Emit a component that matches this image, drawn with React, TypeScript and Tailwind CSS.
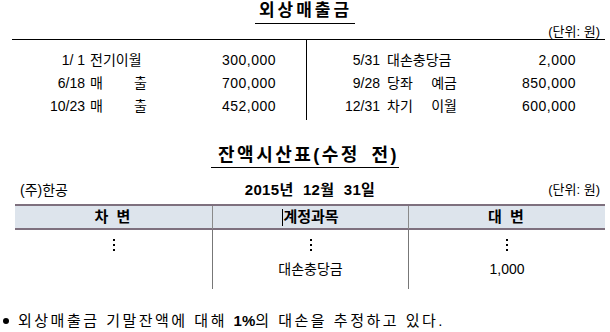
import React from 'react';

const font = { fontFamily: '"Liberation Sans", "Noto Sans CJK KR", sans-serif' };

type Entry = { date: string; label: string[]; amount: string };

const debit: Entry[] = [
  { date: '1/ 1', label: ['전기이월'], amount: '300,000' },
  { date: '6/18', label: ['매', '출'], amount: '700,000' },
  { date: '10/23', label: ['매', '출'], amount: '452,000' },
];

const credit: Entry[] = [
  { date: '5/31', label: ['대손충당금'], amount: '2,000' },
  { date: '9/28', label: ['당좌', '예금'], amount: '850,000' },
  { date: '12/31', label: ['차기', '이월'], amount: '600,000' },
];

function LedgerRow({ e, textW, gap }: { e: Entry; textW: string; gap: string }) {
  return (
    <div className="flex h-[23px] items-center">
      <span className="w-[73px] text-right whitespace-pre">{e.date}</span>
      <span className={`flex justify-between ${gap} ${textW}`}>
        {e.label.map((l) => (
          <span key={l}>{l}</span>
        ))}
      </span>
      <span className="flex-1 text-right tracking-[0.5px]">{e.amount}</span>
    </div>
  );
}

function Dots() {
  return (
    <div className="flex flex-col items-center gap-[3px]">
      <span className="w-[2px] h-[2px] bg-black" />
      <span className="w-[2px] h-[2px] bg-black" />
      <span className="w-[2px] h-[2px] bg-black" />
    </div>
  );
}

export default function App() {
  return (
    <div className="w-[610px] h-[332px] bg-white text-black overflow-hidden" style={font}>
      {/* 외상매출금 계정 */}
      <div className="h-[24px] flex justify-center pt-[2px]">
        <span className="text-[17px] font-bold leading-[18px] tracking-[3px] pl-[4px] pr-[3px] pb-[1px] border-b border-black">
          외상매출금
        </span>
      </div>
      <div className="h-[15px] flex justify-end items-center pr-[10px] text-[13px] leading-none">(단위: 원)</div>
      <div className="ml-[12px] w-[593px] flex border-t border-black text-[14px]">
        <div className="w-[295px] border-r border-black pt-[9px] pb-[2px] pr-[30px]">
          {debit.map((e) => (
            <LedgerRow key={e.date} e={e} textW="w-[57px]" gap="ml-[5px]" />
          ))}
        </div>
        <div className="flex-1 pt-[9px] pb-[2px] pr-[29px]">
          {credit.map((e) => (
            <LedgerRow key={e.date} e={e} textW="w-[70px]" gap="ml-[7px]" />
          ))}
        </div>
      </div>

      {/* 잔액시산표 */}
      <div className="mt-[24px] flex justify-center">
        <span className="text-[18px] font-bold leading-[22px] tracking-[2.5px] [word-spacing:4px] pl-[7px] pb-[1px] border-b border-black">
          잔액시산표(수정 전)
        </span>
      </div>
      <div className="mt-[13px] h-[18px] flex items-center justify-between pl-[20px] pr-[10px] text-[14px]">
        <span className="w-[150px]">(주)한공</span>
        <span className="font-bold text-[15px] tracking-[0.3px] [word-spacing:5px]">2015년 12월 31일</span>
        <span className="w-[150px] text-right text-[13px]">(단위: 원)</span>
      </div>
      <div className="mt-[5px] ml-[15px] w-[590px] text-[14px]">
        <div className="grid grid-cols-[197px_196px_197px] h-[26px] bg-[#dde4ec] border-y-2 border-[#7e707e] font-bold text-[15px]">
          <div className="flex items-center justify-center tracking-[2px]">차 변</div>
          <div className="flex items-center justify-center border-l border-[#8a8a8a]">
            <span className="w-px h-[17px] bg-black" />
            계정과목
          </div>
          <div className="flex items-center justify-center border-l border-[#8a8a8a] tracking-[2px]">대 변</div>
        </div>
        <div className="grid grid-cols-[197px_196px_197px]">
          <div className="h-[27px] flex items-center justify-center pt-[2px]">
            <Dots />
          </div>
          <div className="h-[27px] flex items-center justify-center pt-[2px] border-l border-[#777]">
            <Dots />
          </div>
          <div className="h-[27px] flex items-center justify-center pt-[2px] border-l border-[#777]">
            <Dots />
          </div>
          <div className="h-[32px] pb-[8px]" />
          <div className="h-[32px] pb-[8px] flex items-center justify-center border-l border-[#777]">대손충당금</div>
          <div className="h-[32px] pb-[8px] flex items-center justify-center border-l border-[#777]">1,000</div>
        </div>
      </div>

      {/* 조건 */}
      <div className="mt-[21px] flex items-center pl-[3px] text-[15px] tracking-[2.5px]">
        <span className="w-[6px] h-[6px] rounded-full bg-black mr-[9px]" />
        <span>
          외상매출금 기말잔액에 대해 <b className="tracking-normal">1%</b>의 대손을 추정하고 있다.
        </span>
      </div>
    </div>
  );
}
